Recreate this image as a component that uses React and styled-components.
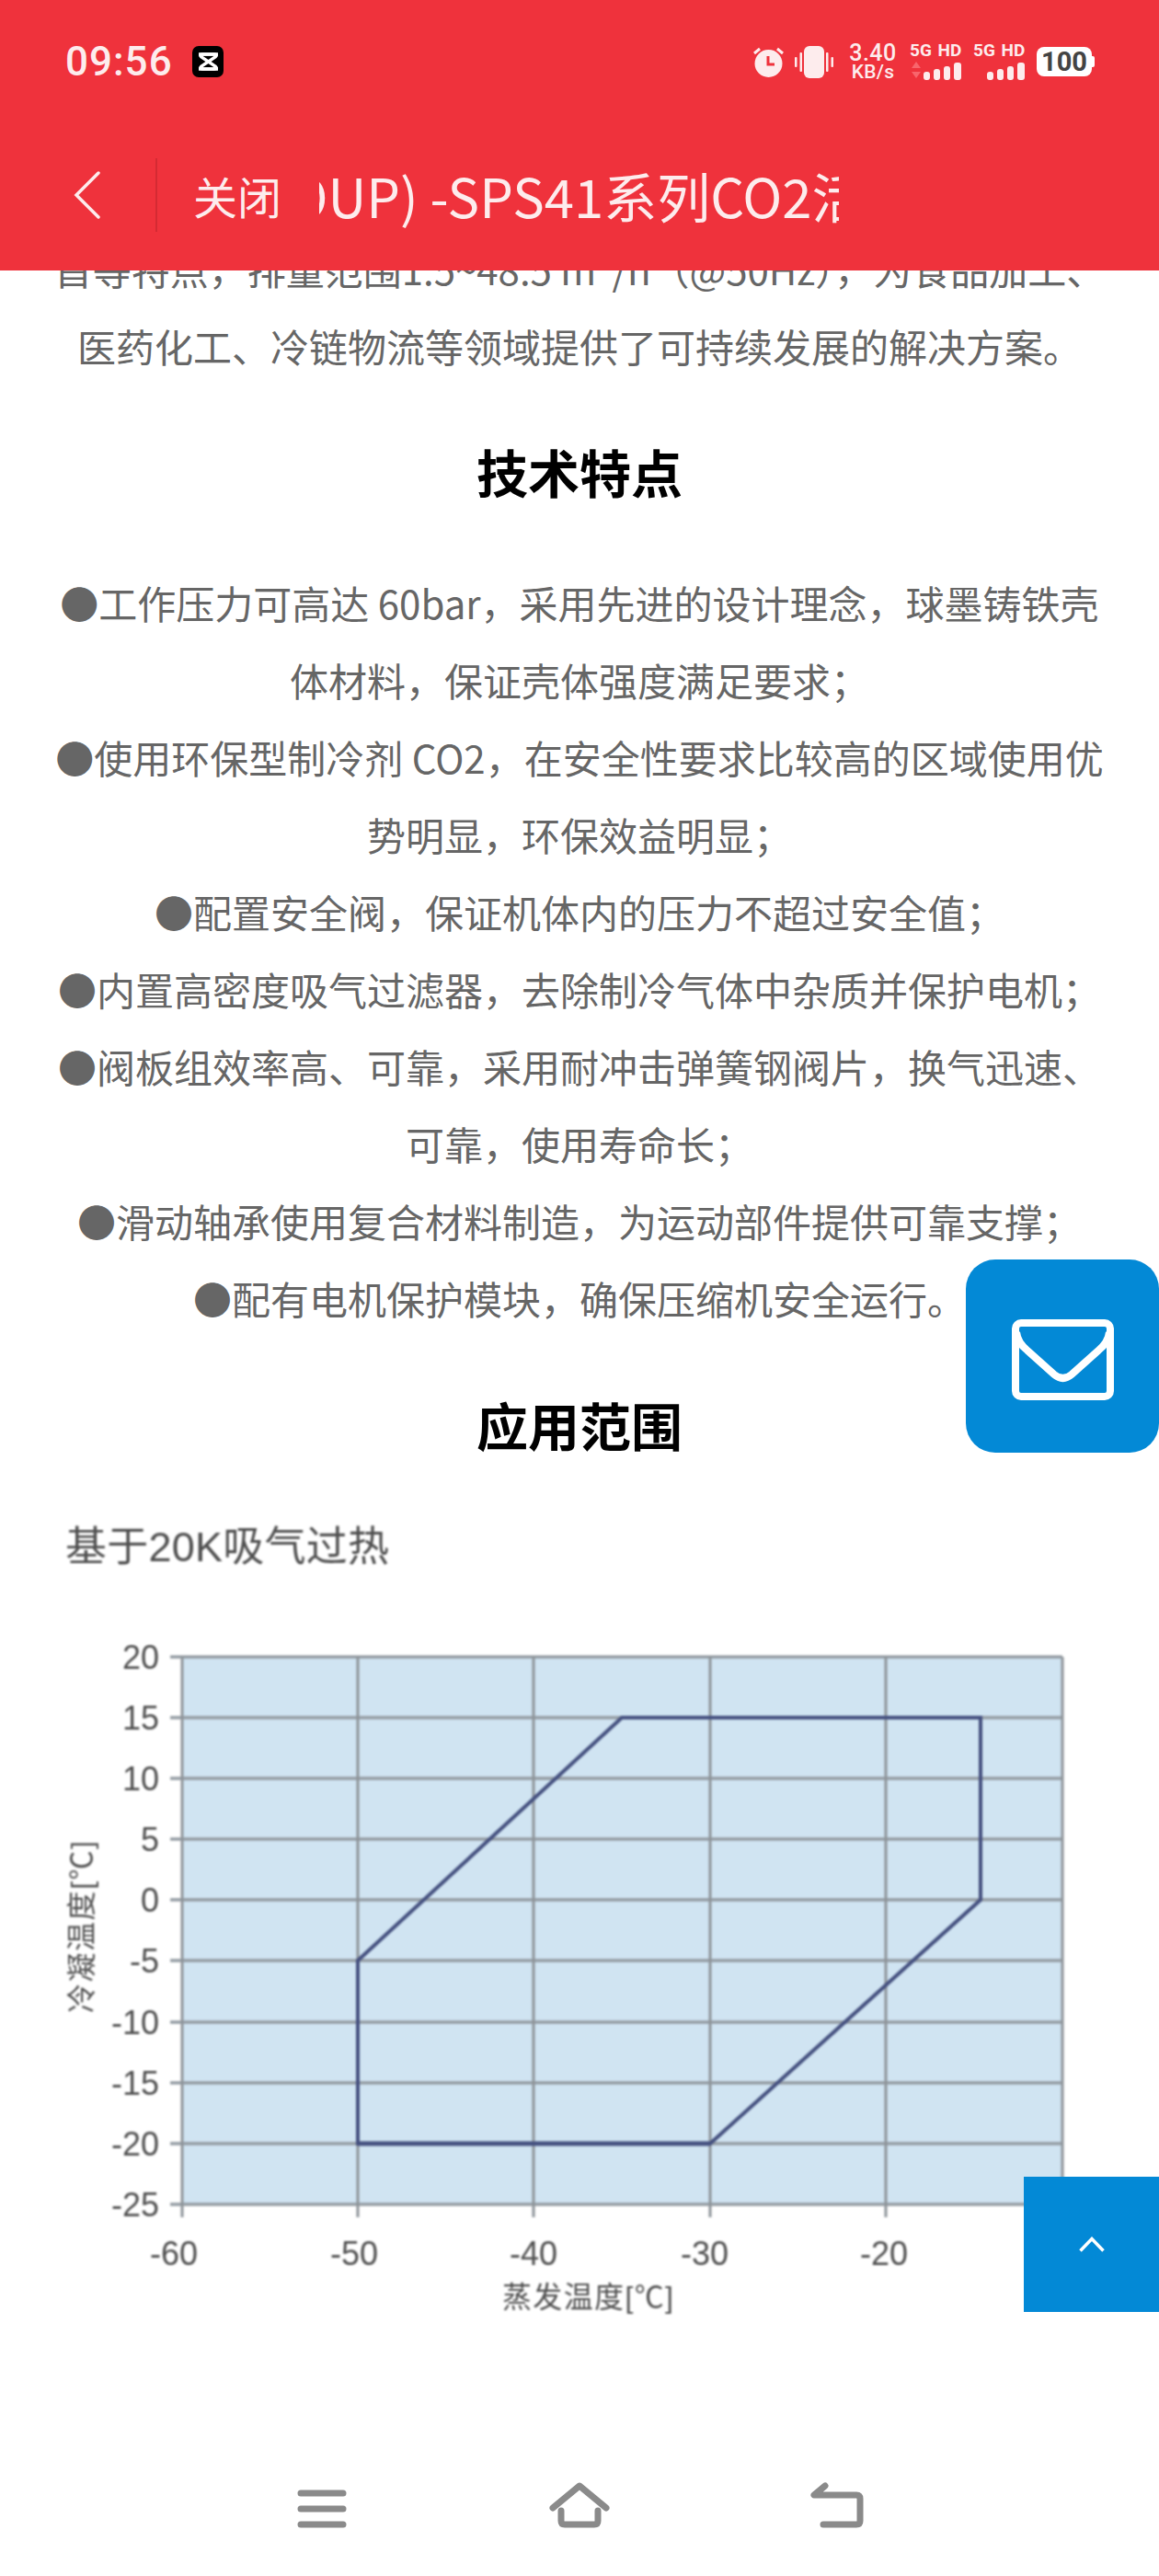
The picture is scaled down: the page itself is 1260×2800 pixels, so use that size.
import React from 'react'
import styled, { createGlobalStyle } from 'styled-components'

const Global = createGlobalStyle`
    html, body {
        margin: 0;
        padding: 0;
        background: #fff;
    }
    body {
        font-family: "Noto Sans CJK SC", "Noto Sans", sans-serif;
    }
`

const Page = styled.div`
    position: relative;
    width: 1260px;
    height: 2800px;
    overflow: hidden;
    background: #fff;
    display: flex;
    flex-direction: column;
`

const Header = styled.header`
    position: absolute;
    top: 0;
    left: 0;
    right: 0;
    height: 294px;
    background: #ef323c;
    color: #fdeced;
    display: flex;
    flex-direction: column;
`

const StatusBar = styled.div`
    height: 134px;
    padding: 0 70px 0 71px;
    display: flex;
    align-items: center;
    justify-content: space-between;
`

const StatusLeft = styled.div`
    display: flex;
    align-items: center;
    gap: 21px;
`

const Time = styled.span`
    font-family: Roboto, sans-serif;
    font-weight: 500;
    font-size: 44px;
    letter-spacing: 1px;
`

const StatusRight = styled.div`
    display: flex;
    align-items: center;
    gap: 12px;
`

const Speed = styled.div`
    width: 56px;
    margin-left: 3px;
    display: flex;
    flex-direction: column;
    align-items: center;
    font-family: Roboto, sans-serif;
    font-weight: 500;
`

const SpeedValue = styled.span`
    font-size: 25px;
    line-height: 23px;
    letter-spacing: 0.5px;
`

const SpeedUnit = styled.span`
    font-size: 21px;
    line-height: 19px;
    letter-spacing: 0.3px;
`

const Network = styled.div`
    width: 57px;
    display: flex;
    flex-direction: column;
    gap: 4px;
`

const NetworkLabel = styled.span`
    font-family: Roboto, sans-serif;
    font-weight: 700;
    font-size: 19px;
    line-height: 16px;
    white-space: nowrap;
    word-spacing: 2px;
`

const Battery = styled.div`
    position: relative;
    width: 60px;
    height: 32px;
    margin-right: 3px;
    border-radius: 8px;
    background: #fff;
    color: #444;
    font-family: Roboto, sans-serif;
    font-weight: 700;
    font-size: 29px;
    line-height: 32px;
    text-align: center;

    &::after {
        content: '';
        position: absolute;
        right: -3px;
        top: 10px;
        width: 3px;
        height: 12px;
        border-radius: 0 2px 2px 0;
        background: #fff;
    }
`

const TitleBar = styled.div`
    height: 156px;
    display: flex;
    align-items: center;
    padding-left: 80px;
`

const BackIcon = styled.svg`
    width: 30px;
    height: 52px;
`

const Divider = styled.div`
    width: 2px;
    height: 80px;
    margin: 0 39px 0 59px;
    background: #d42a33;
`

const CloseLabel = styled.span`
    font-size: 48px;
    width: 137px;
    flex: none;
`

const Marquee = styled.div`
    width: 565px;
    overflow: hidden;
    font-size: 58px;
    white-space: nowrap;
    line-height: 84px;
`

const MarqueeText = styled.span`
    display: inline-block;
    margin-left: -130px;
`

const Main = styled.main`
    flex: 1;
    padding-top: 250px;
`

const Content = styled.section`
    padding: 0 50px;
    color: #666;
    font-size: 42px;
    line-height: 84px;
    text-align: center;
`

const Para = styled.p`
    margin: 0;
`

const Heading = styled.h2`
    margin: ${props => props.$top}px 0 59px;
    color: #000;
    font-size: 56px;
    font-weight: 700;
    line-height: 84px;
`

const Chart = styled.svg`
    display: block;
    width: 1260px;
    height: 900px;
    margin-top: -8px;
    filter: blur(0.8px);
`

const ChartLabel = styled.text`
    font-family: "Liberation Sans", "Noto Sans CJK SC", sans-serif;
    font-size: ${props => props.$size}px;
    fill: #4f4f4f;
`

const FloatButton = styled.div`
    position: absolute;
    right: 0;
    top: ${props => props.$top}px;
    width: ${props => props.$size}px;
    height: ${props => props.$size}px;
    border-radius: ${props => props.$radius}px;
    background: #0389d6;
    display: flex;
    align-items: center;
    justify-content: center;
`

const MailIcon = styled.svg`
    margin-top: 8px;
    fill: none;
    stroke: #fff;
    stroke-width: 8;
`

const NavBar = styled.nav`
    position: absolute;
    left: 210px;
    bottom: 52px;
    width: 840px;
    display: grid;
    grid-template-columns: repeat(3, 1fr);
    justify-items: center;
    align-items: end;
`

const NavIcon = styled.svg`
    display: block;
    fill: none;
    stroke: #8a8a8a;
    stroke-width: 7;
    stroke-linecap: round;
    stroke-linejoin: round;
`

const xTicks = [
    { x: 198, label: '-60', lx: 189 },
    { x: 389, label: '-50', lx: 385 },
    { x: 580, label: '-40', lx: 580 },
    { x: 772, label: '-30', lx: 766 },
    { x: 963, label: '-20', lx: 961 },
    { x: 1155 },
]

const yTicks = [
    [1800, '20'], [1866, '15'], [1932, '10'], [1998, '5'], [2064, '0'],
    [2130, '-5'], [2197, '-10'], [2263, '-15'], [2329, '-20'], [2395, '-25'],
]

const Signal = ({ arrows }) => (
    <svg width="57" height="20" viewBox="0 0 57 20" fill="#fdeced">
        {arrows && <path d="M7 0l5 7H2zM2 11h10l-5 7z" fill="#f8656c" />}
        <rect x="15" y="11" width="7" height="9" rx="3" />
        <rect x="26" y="8" width="7" height="12" rx="3" />
        <rect x="37" y="5" width="7" height="15" rx="3" />
        <rect x="48" y="1" width="8" height="19" rx="3" />
    </svg>
)

const App = () => {
    return (
        <Page>
            <Global />
            <Main>
                <Content>
                    <Para>首等特点，排量范围1.5~48.5 m³/h（@50Hz），为食品加工、医药化工、冷链物流等领域提供了可持续发展的解决方案。</Para>
                    <Heading $top={52}>技术特点</Heading>
                    <Para>●工作压力可高达 60bar，采用先进的设计理念，球墨铸铁壳体材料，保证壳体强度满足要求；</Para>
                    <Para>●使用环保型制冷剂 CO2，在安全性要求比较高的区域使用优势明显，环保效益明显；</Para>
                    <Para>●配置安全阀，保证机体内的压力不超过安全值；</Para>
                    <Para>●内置高密度吸气过滤器，去除制冷气体中杂质并保护电机；</Para>
                    <Para>●阀板组效率高、可靠，采用耐冲击弹簧钢阀片，换气迅速、可靠，使用寿命长；</Para>
                    <Para>●滑动轴承使用复合材料制造，为运动部件提供可靠支撑；</Para>
                    <Para>●配有电机保护模块，确保压缩机安全运行。</Para>
                    <Heading $top={53}>应用范围</Heading>
                </Content>
                <Chart viewBox="0 1640 1260 900">
                    <ChartLabel $size={45} x="71" y="1696" textLength="352">基于20K吸气过热</ChartLabel>
                    <rect x="198" y="1800" width="957" height="595" fill="#d0e4f2" />
                    {yTicks.map(([y, label]) => (
                        <g key={label}>
                            <line x1="185" x2="1155" y1={y} y2={y} stroke="#949ca3" strokeWidth="3.5" />
                            <ChartLabel $size={36} x="173" y={y + 13} textAnchor="end">{label}</ChartLabel>
                        </g>
                    ))}
                    {xTicks.map(t => (
                        <g key={t.x}>
                            <line x1={t.x} x2={t.x} y1="1800" y2={t.label ? 2409 : 2395} stroke="#8e9499" strokeWidth="3" />
                            {t.label && <ChartLabel $size={36} x={t.lx} y="2461" textAnchor="middle">{t.label}</ChartLabel>}
                        </g>
                    ))}
                    <path d="M389 2130L676 1866H1066V2064L772 2329H389Z" fill="none" stroke="#44507f" strokeWidth="4" />
                    <path d="M389 2329H772" fill="none" stroke="#44507f" strokeWidth="5" />
                    <ChartLabel $size={32} x="546" y="2507" textLength="186">蒸发温度[℃]</ChartLabel>
                    <ChartLabel $size={32} transform="translate(100 2187) rotate(-90)" textLength="187">冷凝温度[℃]</ChartLabel>
                </Chart>
            </Main>

            <Header>
                <StatusBar>
                    <StatusLeft>
                        <Time>09:56</Time>
                        <svg width="34" height="34" viewBox="0 0 34 34">
                            <rect width="34" height="34" rx="7" fill="#000" />
                            <path d="M28 9H11Q7 9 10 12L25 22Q28 25 24 25H7" fill="none" stroke="#fff" strokeWidth="3.5" />
                            <path d="M28 25H11Q7 25 10 22L25 12Q28 9 24 9H7" fill="none" stroke="#fff" strokeWidth="3.5" />
                        </svg>
                    </StatusLeft>
                    <StatusRight>
                        <svg width="33" height="33" viewBox="0 0 33 33">
                            <circle cx="16.5" cy="18" r="15" fill="#fdeced" />
                            <path d="M16 10v9h7" fill="none" stroke="#ef323c" strokeWidth="3" />
                            <path d="M1 7l6-5M32 7l-6-5" stroke="#fdeced" strokeWidth="3" />
                        </svg>
                        <svg width="42" height="35" viewBox="0 0 42 35" fill="#fdeced">
                            <rect x="10" y="0" width="22" height="35" rx="6" />
                            <rect x="0" y="12" width="2.5" height="11" rx="1" />
                            <rect x="5.5" y="7" width="2.5" height="21" rx="1" />
                            <rect x="34" y="7" width="2.5" height="21" rx="1" />
                            <rect x="39.5" y="12" width="2.5" height="11" rx="1" />
                        </svg>
                        <Speed>
                            <SpeedValue>3.40</SpeedValue>
                            <SpeedUnit>KB/s</SpeedUnit>
                        </Speed>
                        <Network>
                            <NetworkLabel>5G HD</NetworkLabel>
                            <Signal arrows />
                        </Network>
                        <Network>
                            <NetworkLabel>5G HD</NetworkLabel>
                            <Signal />
                        </Network>
                        <Battery>100</Battery>
                    </StatusRight>
                </StatusBar>
                <TitleBar>
                    <BackIcon viewBox="0 0 30 52">
                        <path d="M27 2L3 26l24 24" fill="none" stroke="#fdeced" strokeWidth="3.5" strokeLinecap="round" />
                    </BackIcon>
                    <Divider />
                    <CloseLabel>关闭</CloseLabel>
                    <Marquee>
                        <MarqueeText>(GROUP) -SPS41系列CO2活塞压缩机</MarqueeText>
                    </Marquee>
                </TitleBar>
            </Header>

            <FloatButton $top={1369} $size={210} $radius={32}>
                <MailIcon width="111" height="88" viewBox="0 0 111 88">
                    <rect x="4" y="4" width="103" height="80" rx="6" />
                    <path d="M5 14C6 24 12 30 17 34L46 60Q55.5 68 65 60L94 34C99 30 105 24 106 14" />
                </MailIcon>
            </FloatButton>
            <FloatButton $top={2366} $size={147} $radius={0}>
                <svg width="28" height="17" viewBox="0 0 28 17" fill="none" stroke="#fff" strokeWidth="3.5">
                    <path d="M1.5 15.5L14 2.5l12.5 13" />
                </svg>
            </FloatButton>

            <NavBar>
                <NavIcon width="54" height="42" viewBox="0 0 54 42">
                    <path d="M4 4h46M4 21h46M4 38h46" />
                </NavIcon>
                <NavIcon width="66" height="50" viewBox="0 0 66 50">
                    <path d="M4 28L33 4l29 24" />
                    <path d="M13 31v11q0 4 4 4h32q4 0 4-4V31" />
                </NavIcon>
                <NavIcon width="58" height="50" viewBox="0 0 58 50">
                    <path d="M16 4L4 14h46q4 0 4 4v24q0 4-4 4H14" />
                </NavIcon>
            </NavBar>
        </Page>
    )
}

export default App
